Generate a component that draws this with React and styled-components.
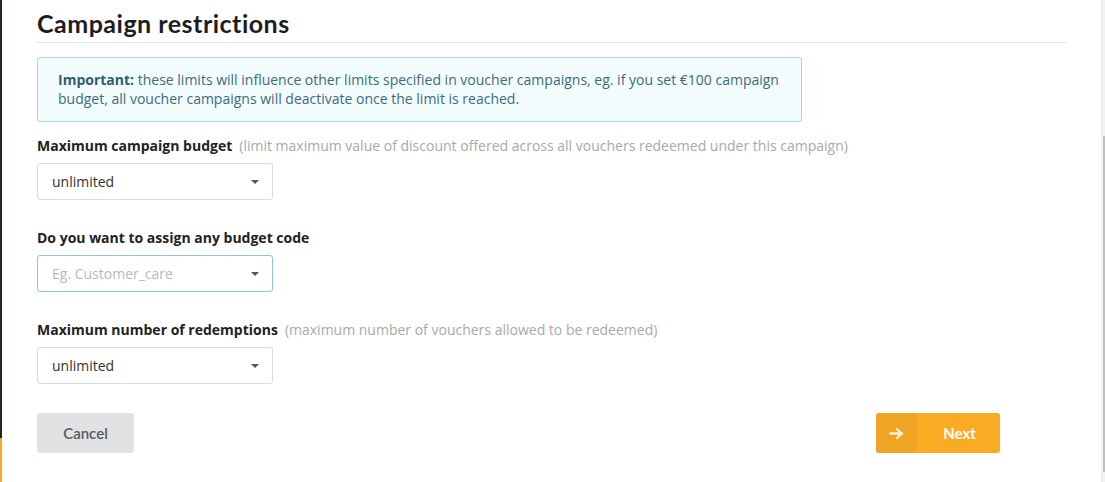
import React from 'react';
import styled, { createGlobalStyle } from 'styled-components';

const GlobalStyle = createGlobalStyle`
  html, body {
    margin: 0;
    padding: 0;
    background: #fff;
  }
  body {
    font-family: 'Open Sans', 'Liberation Sans', sans-serif;
    color: #222;
  }
`;

const Frame = styled.div`
  display: flex;
  height: 482px;
  overflow: hidden;
`;

const SideEdge = styled.div`
  width: 2px;
  flex-shrink: 0;
  display: flex;
  flex-direction: column;
  background: #1f242d;

  .accent {
    margin-top: auto;
    height: 44px;
    background: #f9a825;
  }
`;

const Main = styled.main`
  flex: 1;
  padding: 0 35px 0 35px;
  min-width: 0;
`;

const ScrollTrack = styled.div`
  width: 4px;
  flex-shrink: 0;
  background: #f1f1f1;
  display: flex;
  justify-content: flex-end;

  .thumb {
    width: 2px;
    margin-top: 136px;
    height: 336px;
    background: #c1c1c1;
  }
`;

const Title = styled.h2`
  margin: 0;
  padding: 8px 0 4px;
  font-family: Lato, 'Open Sans', sans-serif;
  font-weight: 700;
  font-size: 25px;
  line-height: 30px;
  letter-spacing: 0.5px;
  color: #1d1d1f;
  border-bottom: 1px solid #e2e2e2;
`;

const Notice = styled.div`
  margin-top: 14px;
  max-width: 723px;
  padding: 12px 20px 13px;
  border: 1px solid #a8d5e0;
  border-radius: 3px;
  background: #f3fcfd;
  color: #3c6b7d;
  font-size: 14px;
  line-height: 19px;

  strong {
    color: #2f5d6e;
    font-weight: 700;
  }
`;

const Form = styled.div`
  margin-top: 14px;
  display: flex;
  flex-direction: column;
  gap: 28px;
`;

const Field = styled.div`
  display: flex;
  flex-direction: column;
  gap: 7px;
`;

const Label = styled.label`
  font-size: 14px;
  line-height: 20px;
  font-weight: 700;
  color: #222;

  span {
    margin-left: 7px;
    font-weight: 400;
    color: #a9a9a9;
  }
`;

const Select = styled.div`
  box-sizing: border-box;
  width: 236px;
  height: 37px;
  display: flex;
  align-items: center;
  justify-content: space-between;
  padding: 0 13px 0 14px;
  border: 1px solid ${(p) => (p.$focused ? '#8fc6d4' : '#dcdcdc')};
  border-radius: 3px;
  font-size: 14px;
  color: ${(p) => (p.$placeholder ? '#b9b9b9' : '#333')};
  background: #fff;
`;

const Caret = styled.i`
  width: 0;
  height: 0;
  border-left: 4px solid transparent;
  border-right: 4px solid transparent;
  border-top: 4px solid #555;
`;

const Actions = styled.div`
  margin-top: 29px;
  max-width: 963px;
  display: flex;
  justify-content: space-between;
`;

const Button = styled.button`
  height: 40px;
  border: none;
  border-radius: 3px;
  font-family: Lato, 'Open Sans', sans-serif;
  font-size: 15px;
  font-weight: 700;
  cursor: pointer;
  padding: 0;
`;

const CancelButton = styled(Button)`
  width: 97px;
  background: #e1e2e4;
  color: #555a60;
  font-weight: 600;
`;

const NextButton = styled(Button)`
  width: 124px;
  display: flex;
  align-items: stretch;
  overflow: hidden;
  background: #faab24;
  color: #fff;

  .icon {
    width: 41px;
    display: flex;
    align-items: center;
    justify-content: center;
    background: #efa423;
  }
  .label {
    flex: 1;
    display: flex;
    align-items: center;
    justify-content: center;
    padding-left: 2px;
  }
`;

const ArrowIcon = () => (
  <svg width="15" height="13" viewBox="0 0 15 13" fill="none">
    <path
      d="M1.5 6.5h11.5M8 2l4.5 4.5L8 11"
      stroke="#fff0d4"
      strokeWidth="2.4"
      strokeLinecap="round"
      strokeLinejoin="round"
    />
  </svg>
);

const fields = [
  {
    label: 'Maximum campaign budget',
    hint: '(limit maximum value of discount offered across all vouchers redeemed under this campaign)',
    value: 'unlimited',
  },
  {
    label: 'Do you want to assign any budget code',
    placeholder: 'Eg. Customer_care',
    focused: true,
  },
  {
    label: 'Maximum number of redemptions',
    hint: '(maximum number of vouchers allowed to be redeemed)',
    value: 'unlimited',
  },
];

const App = () => {
  return (
    <Frame>
      <GlobalStyle />
      <SideEdge>
        <div className="accent" />
      </SideEdge>
      <Main>
        <Title>Campaign restrictions</Title>
        <Notice>
          <strong>Important:</strong> these limits will influence other limits
          specified in voucher campaigns, eg. if you set €100 campaign budget,
          all voucher campaigns will deactivate once the limit is reached.
        </Notice>
        <Form>
          {fields.map((f) => (
            <Field key={f.label}>
              <Label>
                {f.label}
                {f.hint && <span>{f.hint}</span>}
              </Label>
              <Select $focused={f.focused} $placeholder={!f.value}>
                {f.value || f.placeholder}
                <Caret />
              </Select>
            </Field>
          ))}
        </Form>
        <Actions>
          <CancelButton>Cancel</CancelButton>
          <NextButton>
            <span className="icon">
              <ArrowIcon />
            </span>
            <span className="label">Next</span>
          </NextButton>
        </Actions>
      </Main>
      <ScrollTrack>
        <div className="thumb" />
      </ScrollTrack>
    </Frame>
  );
};

export default App;
